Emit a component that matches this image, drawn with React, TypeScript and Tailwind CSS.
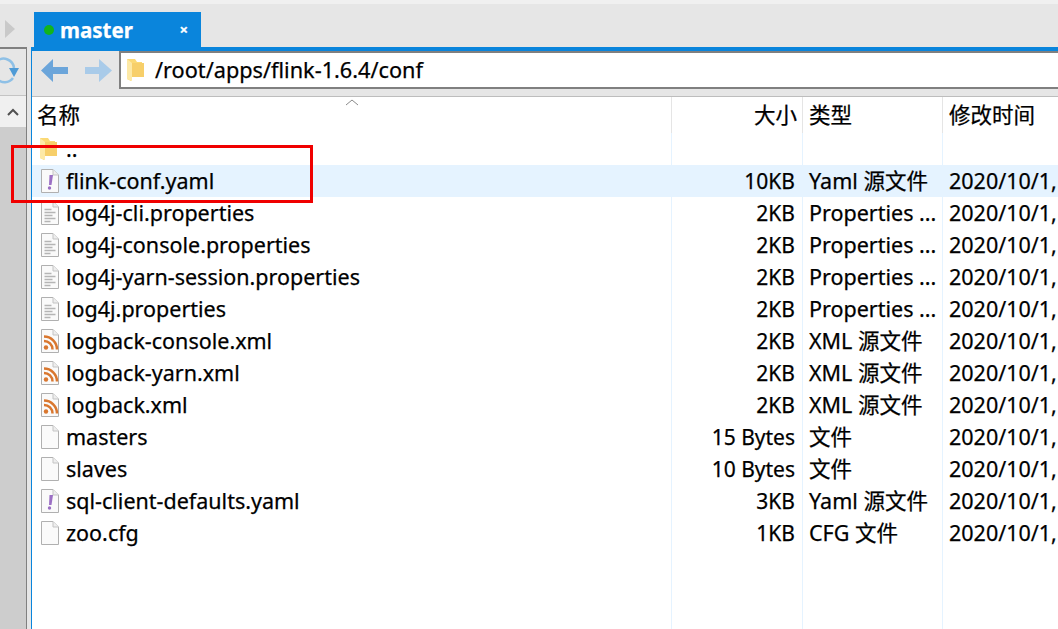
import React from "react";

const FONT = "font-['Noto_Sans','Noto_Sans_CJK_SC',sans-serif]";

function Page({ children }: { children?: React.ReactNode }) {
  return (
    <svg width="20" height="26" viewBox="0 0 20 26" className="shrink-0">
      <path d="M1.5 1.5H13L18.5 7V24.500H1.5Z" fill="#fafafa" stroke="#b0b0b0" />
      <path d="M13 1.5V7H18.5" fill="#eee" stroke="#c4c4c4" />
      {children}
    </svg>
  );
}
const Blank = () => <Page />;
const Yaml = () => (
  <Page>
    <path d="M9.500 7h3.500L11.500 17H9Z" fill="#9b6fc4" />
    <circle cx="9.500" cy="20" r="1.7" fill="#9b6fc4" />
  </Page>
);
const Text = () => (
  <Page>
    <path d="M4.5 9.5h7M4.5 12.5h11M4.5 15.5h8M4.5 18.5h11M4.5 21.5h6" stroke="#b5b5b5" strokeWidth="1.5" />
  </Page>
);
const Rss = () => (
  <Page>
    <circle cx="6" cy="19.5" r="2.2" fill="#d9772f" />
    <path d="M4 13a8.500 8.500 0 0 1 8.500 8.500" fill="none" stroke="#d9772f" strokeWidth="2.500" />
    <path d="M4 8.500a13 13 0 0 1 13 13" fill="none" stroke="#d9772f" strokeWidth="2.500" />
  </Page>
);
const Folder = () => (
  <svg width="18" height="24" viewBox="0 0 18 24" className="shrink-0">
    <path d="M0 1h8l2 3h5v15H5l-1 4-4-2Z" fill="#fbd975" />
    <path d="M5 5h12v14H4Z" fill="#f7cf6a" />
    <path d="M0 1l5 4v18l-5-2Z" fill="#fde9a6" />
  </svg>
);

const rows: [React.ReactNode, string, string, string][] = [
  [<Folder />, "..", "", ""],
  [<Yaml />, "flink-conf.yaml", "10KB", "Yaml 源文件"],
  [<Text />, "log4j-cli.properties", "2KB", "Properties ..."],
  [<Text />, "log4j-console.properties", "2KB", "Properties ..."],
  [<Text />, "log4j-yarn-session.properties", "2KB", "Properties ..."],
  [<Text />, "log4j.properties", "2KB", "Properties ..."],
  [<Rss />, "logback-console.xml", "2KB", "XML 源文件"],
  [<Rss />, "logback-yarn.xml", "2KB", "XML 源文件"],
  [<Rss />, "logback.xml", "2KB", "XML 源文件"],
  [<Blank />, "masters", "15 Bytes", "文件"],
  [<Blank />, "slaves", "10 Bytes", "文件"],
  [<Yaml />, "sql-client-defaults.yaml", "3KB", "Yaml 源文件"],
  [<Blank />, "zoo.cfg", "1KB", "CFG 文件"],
];

export default function App() {
  return (
    <div className={`${FONT} relative w-[1058px] h-[629px] overflow-hidden flex flex-col bg-[#e6e6e6] text-[21.5px] text-black [-webkit-text-stroke-width:0.25px]`}>
      {/* tab strip */}
      <div className="h-[47px] shrink-0 border-t-4 border-[#f0f0f0] flex items-end">
        <svg width="34" height="43" viewBox="0 0 34 43" className="shrink-0">
          <path d="M5 16l10 9-10 9Z" fill="#c9c9c9" />
        </svg>
        <div className="w-[167px] h-[35px] bg-[#0a85dc] flex items-center pl-[10px] text-white">
          <span className="w-[10px] h-[10px] rounded-full bg-[#12b41c] shrink-0" />
          <span className="ml-[6px] mt-[2px] text-[20.5px] font-bold leading-none">master</span>
          <span className="ml-auto mr-[13px] text-[15px] font-bold leading-none">×</span>
        </div>
      </div>

      <div className="flex flex-1 min-h-0">
        {/* left rail */}
        <div className="w-[31px] shrink-0 flex">
          <div className="w-[27px] flex flex-col border-t-[2px] border-r border-[#808080]">
            <div className="h-[47px] shrink-0 overflow-hidden border-b border-[#c4c4c4]">
              <svg width="26" height="46" viewBox="0 0 26 46">
                <path d="M-3 12A10.500 10.500 0 0 1 14 19" fill="none" stroke="#8ec0e6" strokeWidth="2.500" />
                <path d="M13 29A10.500 10.500 0 0 1 -3 30" fill="none" stroke="#8ec0e6" strokeWidth="2.500" />
                <path d="M9 19h10l-5 9Z" fill="#4f9bd6" />
              </svg>
            </div>
            <div className="h-[31px] shrink-0 bg-[#f0f0f0] flex items-center justify-center">
              <svg width="12" height="8" viewBox="0 0 12 8">
                <path d="M1 7l5-5 5 5" fill="none" stroke="#505050" strokeWidth="2" />
              </svg>
            </div>
            <div className="flex-1 bg-[#cdcdcd]" />
          </div>
          <div className="flex-1" />
        </div>

        {/* main panel */}
        <div className="flex-1 min-w-0 flex flex-col border-l border-[#0a85dc]">
          <div className="h-[4px] shrink-0 bg-[#0a85dc] -ml-px" />
          <div className="h-[38px] shrink-0 flex items-center">
            <svg width="87" height="38" viewBox="0 0 87 38" className="shrink-0">
              <path d="M9 19.500L21 8v8h15v7H21v8Z" fill="#6ba5da" />
              <path d="M80 19.500L67 8v8H53v7h14v8Z" fill="#a9cbe9" />
            </svg>
            <div className="flex-1 h-[38px] -mr-px bg-white border-y-2 border-l-2 border-[#808080] flex items-center pl-[6px]">
              <Folder />
              <span className="ml-[10px] text-[21.7px] leading-none -mt-px">/root/apps/flink-1.6.4/conf</span>
            </div>
          </div>
          <div className="h-[8px] shrink-0 border-b border-[#bdbdbd]" />

          <div className="relative flex-1 bg-white flex flex-col">
            <div className="h-[36px] shrink-0 flex items-center bg-white">
              <div className="w-[640px] pl-[5px] h-full flex items-center border-r border-[#e5e5e5]">名称</div>
              <div className="w-[131px] h-full pr-[5px] flex items-center justify-end border-r border-[#e5e5e5]">大小</div>
              <div className="w-[140px] h-full pl-[6px] flex items-center border-r border-[#e5e5e5]">类型</div>
              <div className="flex-1 h-full pl-[6px] flex items-center">修改时间</div>
            </div>
            <svg width="14" height="8" viewBox="0 0 14 8" className="absolute left-[313px] top-[1px]">
              <path d="M1 7l6-5 6 5" fill="none" stroke="#8a8a8a" />
            </svg>
            <div className="flex-1 flex flex-col">
              {rows.map(([icon, name, size, type], i) => (
                <div key={i} className={`h-[32px] shrink-0 flex items-center ${i === 1 ? "bg-[#e5f3ff]" : ""}`}>
                  <div className="w-[640px] h-full pl-[8px] flex items-center border-r border-[#e5f3ff] whitespace-nowrap">
                    <span className="w-[26px] shrink-0 flex items-center">{icon}</span>
                    <span>{name}</span>
                  </div>
                  <div className="w-[131px] h-full pr-[7px] flex items-center justify-end border-r border-[#e5f3ff] whitespace-nowrap text-[21px]">
                    <span className="mt-[2px]">{size}</span>
                  </div>
                  <div className="w-[140px] h-full pl-[6px] flex items-center border-r border-[#e5f3ff] whitespace-nowrap">
                    <span>{type}</span>
                  </div>
                  <div className="flex-1 h-full pl-[6px] flex items-center whitespace-nowrap overflow-hidden">
                    <span>{name === ".." ? "" : "2020/10/1,"}</span>
                  </div>
                </div>
              ))}
              <div className="flex-1 flex">
                <div className="w-[640px] border-r border-[#e5f3ff]" />
                <div className="w-[131px] border-r border-[#e5f3ff]" />
                <div className="w-[140px] border-r border-[#e5f3ff]" />
              </div>
            </div>
          </div>
        </div>
      </div>

      {/* annotation */}
      <div className="absolute left-[11px] top-[145px] w-[302px] h-[58px] border-[3px] border-[#f00000]" />
    </div>
  );
}
